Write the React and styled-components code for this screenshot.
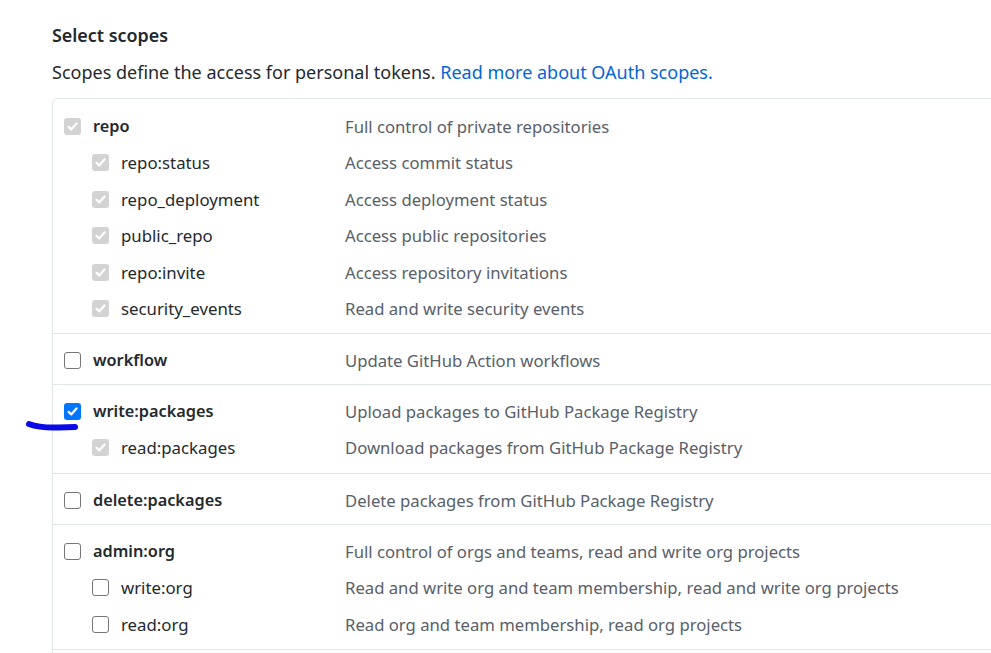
import styled, { createGlobalStyle } from "styled-components";

const GlobalStyle = createGlobalStyle`
  html, body {
    margin: 0;
    padding: 0;
    background: #fff;
  }
  body {
    font-family: "Noto Sans", "Liberation Sans", sans-serif;
    color: #24292e;
    overflow: hidden;
  }
`;

const Page = styled.div`
  position: relative;
  width: 991px;
  height: 653px;
  overflow: hidden;
  padding: 23px 0 0 52px;
  box-sizing: border-box;
`;

const Heading = styled.h3`
  margin: 0;
  font-size: 17.9px;
  font-weight: 600;
  line-height: 24px;
  color: #24292e;
`;

const Intro = styled.p`
  margin: 13px 0 14px;
  font-size: 18px;
  line-height: 24px;
  color: #24292e;
`;

const Link = styled.a`
  color: #0366d6;
  text-decoration: none;
`;

const ScopeBox = styled.div`
  width: 1000px;
  border: 1px solid #e1e4e8;
  border-radius: 6px;
`;

const Group = styled.div`
  padding-top: ${(p) => (p.$first ? "9px" : "8px")};
  padding-bottom: ${(p) => (p.$first ? "6px" : p.$nested ? "6.75px" : "5.5px")};
  border-top: ${(p) => (p.$first ? "none" : "1px solid #e1e4e8")};
`;

const Row = styled.div`
  display: flex;
  align-items: center;
  height: 36.5px;
  padding-left: ${(p) => (p.$child ? "39px" : "11px")};
`;

const Label = styled.div`
  display: flex;
  align-items: center;
  gap: 12px;
  width: ${(p) => (p.$child ? "253px" : "281px")};
  font-size: ${(p) => (p.$child ? "16.8px" : "16.3px")};
  font-weight: ${(p) => (p.$child ? 400 : 600)};
  color: #24292e;
`;

const Box = styled.span`
  flex: none;
  width: 17px;
  height: 17px;
  box-sizing: border-box;
  border-radius: 3px;
  display: flex;
  align-items: center;
  justify-content: center;
  background: ${(p) =>
    p.$state === "on" ? "#0075ff" : p.$state === "off" ? "#fff" : "#d3d3d3"};
  border: ${(p) => (p.$state === "off" ? "1px solid #767676" : "none")};
`;

const Desc = styled.div`
  font-size: 16.7px;
  color: #586069;
`;

const Mark = styled.svg`
  position: absolute;
  left: 25px;
  top: 417px;
`;

function Check({ state }) {
  return (
    <Box $state={state}>
      {state !== "off" && (
        <svg width="13" height="13" viewBox="0 0 13 13">
          <path
            d="M2.5 6.8 L5.2 9.4 L10.5 3.4"
            fill="none"
            stroke="#fff"
            strokeWidth="2.2"
            strokeLinecap="round"
            strokeLinejoin="round"
          />
        </svg>
      )}
    </Box>
  );
}

const groups = [
  [
    ["repo", "Full control of private repositories", "dis"],
    ["repo:status", "Access commit status", "dis"],
    ["repo_deployment", "Access deployment status", "dis"],
    ["public_repo", "Access public repositories", "dis"],
    ["repo:invite", "Access repository invitations", "dis"],
    ["security_events", "Read and write security events", "dis"],
  ],
  [["workflow", "Update GitHub Action workflows", "off"]],
  [
    ["write:packages", "Upload packages to GitHub Package Registry", "on"],
    ["read:packages", "Download packages from GitHub Package Registry", "dis"],
  ],
  [["delete:packages", "Delete packages from GitHub Package Registry", "off"]],
  [
    ["admin:org", "Full control of orgs and teams, read and write org projects", "off"],
    ["write:org", "Read and write org and team membership, read and write org projects", "off"],
    ["read:org", "Read org and team membership, read org projects", "off"],
  ],
];

function App() {
  return (
    <Page>
      <GlobalStyle />
      <Heading>Select scopes</Heading>
      <Intro>
        Scopes define the access for personal tokens.{" "}
        <Link href="#">Read more about OAuth scopes.</Link>
      </Intro>
      <ScopeBox>
        {groups.map((rows, gi) => (
          <Group key={gi} $first={gi === 0} $nested={rows.length > 1}>
            {rows.map(([name, desc, state], ri) => (
              <Row key={name} $child={ri > 0}>
                <Label $child={ri > 0}>
                  <Check state={state} />
                  {name}
                </Label>
                <Desc>{desc}</Desc>
              </Row>
            ))}
          </Group>
        ))}
        <Group />
      </ScopeBox>
      <Mark width="56" height="18" viewBox="0 0 56 18">
        <path
          d="M4 7 C12 10 22 11 34 10.5 L50 10"
          fill="none"
          stroke="#0a0ae6"
          strokeWidth="6"
          strokeLinecap="round"
        />
      </Mark>
    </Page>
  );
}

export default App;
